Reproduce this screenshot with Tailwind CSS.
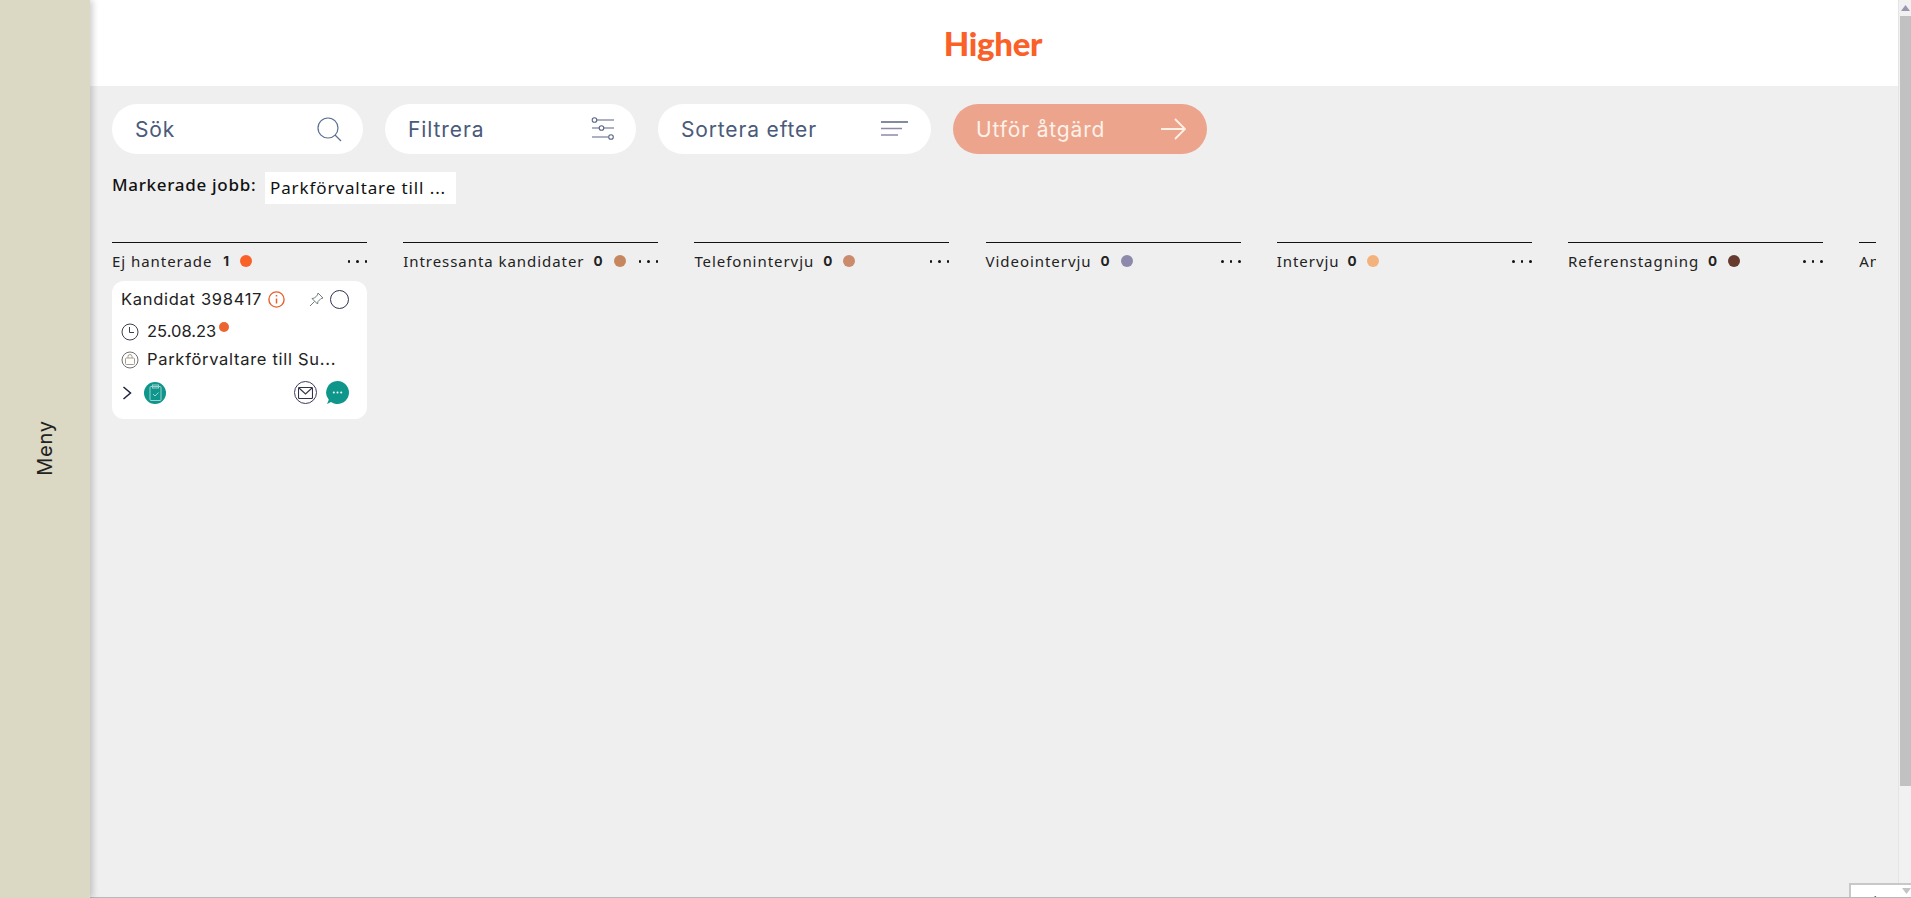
<!doctype html>
<html lang="sv">
<head>
<meta charset="utf-8">
<title>Higher</title>
<script src="https://cdn.jsdelivr.net/npm/@tailwindcss/browser@4"></script>
</head>
<body class="m-0 h-[898px] w-[1911px] overflow-hidden bg-[#efefef] font-['Inter',sans-serif]">
<div class="relative flex h-[898px] w-[1911px]">
  <aside class="z-10 flex h-full w-[90px] shrink-0 items-center justify-center bg-[#dbd8c4] shadow-[3px_0_6px_rgba(0,0,0,0.18)]">
    <span class="-mt-[2px] -rotate-90 text-[20px] tracking-[0.8px] text-[#222222]">Meny</span>
  </aside>
  <main class="flex h-full w-[1808px] shrink-0 flex-col">
    <header class="flex h-[86px] shrink-0 items-center justify-center bg-white">
      <span class="-ml-[2px] font-['Lato',sans-serif] text-[33px] leading-none font-black tracking-[-0.3px] text-[#fa6128]">Higher</span>
    </header>
    <div class="flex flex-col pl-[22px]">
      <div class="mt-[18px] flex gap-[22px]">
        <div class="flex h-[50px] w-[251px] items-center justify-between rounded-[25px] bg-white pr-[21px] pl-[23px] text-[21px] tracking-[0.9px] text-[#4a5a7a]">
          <span class="pt-[1px]">Sök</span>
          <svg class="h-[26px] w-[26px]" viewBox="0 0 26 26" fill="none" stroke="#5a7090" stroke-width="1.2"><circle cx="12" cy="12" r="10"/><path d="M19 19l6 6"/></svg>
        </div>
        <div class="flex h-[50px] w-[251px] items-center justify-between rounded-[25px] bg-white pr-[21px] pl-[23px] text-[21px] tracking-[0.9px] text-[#4a5a7a]">
          <span class="pt-[1px]">Filtrera</span>
          <svg class="h-[24px] w-[24px]" viewBox="0 0 24 24" fill="none" stroke="#5a6484" stroke-width="1.1"><path d="M6 3h17M1 11h7M13 11h10M1 20h16"/><circle cx="3.500" cy="3" r="2.300"/><circle cx="10.500" cy="11" r="2.300"/><circle cx="20" cy="20" r="2.300"/></svg>
        </div>
        <div class="flex h-[50px] w-[273px] items-center justify-between rounded-[25px] bg-white pr-[22px] pl-[23px] text-[21px] tracking-[0.85px] text-[#4a5a7a]">
          <span class="pt-[1px]">Sortera efter</span>
          <svg class="h-[16px] w-[28px]" viewBox="0 0 28 16" fill="none" stroke-width="1.500"><path d="M0 1h27" stroke="#5a6484"/><path d="M0 7.500h21" stroke="#8d89ab"/><path d="M0 14h17" stroke="#8d89ab"/></svg>
        </div>
        <div class="flex h-[50px] w-[254px] items-center justify-between rounded-[25px] bg-[#eca48c] pr-[21px] pl-[23px] text-[21px] tracking-[0.85px] text-[#fdf1e8]">
          <span class="pt-[1px]">Utför åtgärd</span>
          <svg class="h-[24px] w-[26px]" viewBox="0 0 26 24" fill="none" stroke="#fdf1e8" stroke-width="1.800"><path d="M1 12h24M15 2l10 10-10 10"/></svg>
        </div>
      </div>
      <div class="mt-[18px] flex h-[32px] items-center font-['Noto_Sans',sans-serif]">
        <span class="-mt-[6px] w-[153px] text-[17px] font-medium tracking-[0.7px] whitespace-nowrap text-[#111111]">Markerade jobb:</span>
        <span class="flex h-[32px] w-[191px] items-center bg-white pl-[5px] text-[17px] tracking-[0.9px] whitespace-nowrap text-[#111111]">Parkförvaltare till ...</span>
      </div>
      <div class="mt-[38px] flex w-[1764px] gap-[36.2px] overflow-hidden font-['Noto_Sans',sans-serif]">
        <section class="w-[255px] shrink-0">
          <div class="h-px bg-[#111111]"></div>
          <div class="mt-[7.5px] flex h-[22px] items-center text-[15px] tracking-[0.95px] text-[#222222]">
            <span class="whitespace-nowrap">Ej hanterade</span><b class="ml-[11px] font-['Inter',sans-serif] text-[13.500px] font-bold">1</b><i class="mb-[2px] ml-[10px] h-[12px] w-[12px] rounded-full bg-[#fa6128]"></i>
            <span class="ml-auto flex gap-[6px]"><i class="h-[2.500px] w-[2.500px] rounded-full bg-[#111111]"></i><i class="h-[2.500px] w-[2.500px] rounded-full bg-[#111111]"></i><i class="h-[2.500px] w-[2.500px] rounded-full bg-[#111111]"></i></span>
          </div>
          <article class="mt-[8px] h-[138px] rounded-[12px] bg-white pt-[7px] pr-[10px] pl-[9px] font-['Inter',sans-serif] text-[16.500px] tracking-[0.7px] text-[#222222]">
            <div class="flex h-[24px] items-center">
              <span class="whitespace-nowrap">Kandidat 398417</span>
              <svg class="ml-[6px] h-[17px] w-[17px]" viewBox="0 0 17 17" fill="none" stroke="#e8602c" stroke-width="1.400"><circle cx="8.500" cy="8.500" r="7.600"/><path d="M8.500 7.500v5M8.500 4v1.500" stroke-width="1.500"/></svg>
              <svg class="ml-auto h-[15px] w-[15px]" viewBox="0 0 15 15" fill="none" stroke="#6d7f7c" stroke-width="1"><path d="M9 1l5 5-2 .5-3 3-.5 2.500L3 6.500 5.500 6l3-3zM5.500 9.500L1 14"/></svg>
              <span class="mr-[8px] ml-[6px] h-[19px] w-[19px] rounded-full border-[1.300px] border-[#2d3352]"></span>
            </div>
            <div class="mt-[9px] flex h-[22px] items-center tracking-normal">
              <svg class="mr-[8px] h-[18px] w-[18px]" viewBox="0 0 18 18" fill="none" stroke="#3b4050" stroke-width="1"><circle cx="9" cy="9" r="8"/><path d="M8.500 4v5.500H13"/></svg>
              <span>25.08.23</span><i class="mb-[10px] ml-[3px] h-[10px] w-[10px] rounded-full bg-[#ec652f]"></i>
            </div>
            <div class="mt-[6px] flex h-[22px] items-center">
              <svg class="mr-[8px] h-[18px] w-[18px]" viewBox="0 0 18 18" fill="none" stroke="#6c6f75" stroke-width="1"><circle cx="9" cy="9" r="8"/><rect x="4.500" y="7" width="9" height="6.500" rx="1" stroke="#a89c86"/><path d="M7 7V5.500a2 2 0 0 1 4 0V7" stroke="#a89c86"/></svg>
              <span class="whitespace-nowrap">Parkförvaltare till Su...</span>
            </div>
            <div class="mt-[10px] flex h-[24px] items-center">
              <svg class="ml-[1px] h-[14px] w-[10px]" viewBox="0 0 10 14" fill="none" stroke="#1b2040" stroke-width="1.500"><path d="M1.500 1l7 6-7 6"/></svg>
              <span class="ml-[12px] flex h-[22px] w-[22px] items-center justify-center rounded-full bg-[#0e968a]">
                <svg class="h-[17px] w-[13px]" viewBox="0 0 13 17" fill="none" stroke="#9fd2d0" stroke-width="1"><rect x="1" y="2.500" width="11" height="14" rx="1"/><rect x="3.500" y="1" width="6" height="3"/><path d="M4 10l2 2 3.500-3.500"/></svg>
              </span>
              <span class="ml-auto flex h-[23px] w-[23px] items-center justify-center rounded-full border-[1.300px] border-[#3d3a5c]">
                <svg class="h-[12px] w-[15px]" viewBox="0 0 15 12" fill="none" stroke="#333347" stroke-width="1.100"><rect x=".5" y=".5" width="14" height="11" rx="1"/><path d="M1 1l6.500 6L14 1"/></svg>
              </span>
              <svg class="mr-[7px] ml-[8px] h-[25px] w-[25px]" viewBox="0 0 25 25"><path d="M12.500 1a11.500 11.500 0 1 1-6.500 21L2 24l1.800-4.200A11.500 11.500 0 0 1 12.500 1z" fill="#0e968a"/><circle cx="8.800" cy="12.500" r="1" fill="#fff"/><circle cx="12.500" cy="12.500" r="1" fill="#fff"/><circle cx="16.200" cy="12.500" r="1" fill="#fff"/></svg>
            </div>
          </article>
        </section>
        <section class="w-[255px] shrink-0">
          <div class="h-px bg-[#111111]"></div>
          <div class="mt-[7.5px] flex h-[22px] items-center text-[15px] tracking-[0.95px] text-[#222222]">
            <span class="whitespace-nowrap">Intressanta kandidater</span><b class="ml-[9px] font-['Inter',sans-serif] text-[13.500px] font-bold">0</b><i class="mb-[2px] ml-[10px] h-[12px] w-[12px] rounded-full bg-[#c6865f]"></i>
            <span class="ml-auto flex gap-[6px]"><i class="h-[2.500px] w-[2.500px] rounded-full bg-[#111111]"></i><i class="h-[2.500px] w-[2.500px] rounded-full bg-[#111111]"></i><i class="h-[2.500px] w-[2.500px] rounded-full bg-[#111111]"></i></span>
          </div>
        </section>
        <section class="w-[255px] shrink-0">
          <div class="h-px bg-[#111111]"></div>
          <div class="mt-[7.5px] flex h-[22px] items-center text-[15px] tracking-[0.95px] text-[#222222]">
            <span>Telefonintervju</span><b class="ml-[9px] font-['Inter',sans-serif] text-[13.500px] font-bold">0</b><i class="mb-[2px] ml-[10px] h-[12px] w-[12px] rounded-full bg-[#cc8a6c]"></i>
            <span class="ml-auto flex gap-[6px]"><i class="h-[2.500px] w-[2.500px] rounded-full bg-[#111111]"></i><i class="h-[2.500px] w-[2.500px] rounded-full bg-[#111111]"></i><i class="h-[2.500px] w-[2.500px] rounded-full bg-[#111111]"></i></span>
          </div>
        </section>
        <section class="w-[255px] shrink-0">
          <div class="h-px bg-[#111111]"></div>
          <div class="mt-[7.5px] flex h-[22px] items-center text-[15px] tracking-[0.95px] text-[#222222]">
            <span>Videointervju</span><b class="ml-[9px] font-['Inter',sans-serif] text-[13.500px] font-bold">0</b><i class="mb-[2px] ml-[10px] h-[12px] w-[12px] rounded-full bg-[#8d89ab]"></i>
            <span class="ml-auto flex gap-[6px]"><i class="h-[2.500px] w-[2.500px] rounded-full bg-[#111111]"></i><i class="h-[2.500px] w-[2.500px] rounded-full bg-[#111111]"></i><i class="h-[2.500px] w-[2.500px] rounded-full bg-[#111111]"></i></span>
          </div>
        </section>
        <section class="w-[255px] shrink-0">
          <div class="h-px bg-[#111111]"></div>
          <div class="mt-[7.5px] flex h-[22px] items-center text-[15px] tracking-[0.95px] text-[#222222]">
            <span>Intervju</span><b class="ml-[8px] font-['Inter',sans-serif] text-[13.500px] font-bold">0</b><i class="mb-[2px] ml-[9px] h-[12px] w-[12px] rounded-full bg-[#f3b27c]"></i>
            <span class="ml-auto flex gap-[6px]"><i class="h-[2.500px] w-[2.500px] rounded-full bg-[#111111]"></i><i class="h-[2.500px] w-[2.500px] rounded-full bg-[#111111]"></i><i class="h-[2.500px] w-[2.500px] rounded-full bg-[#111111]"></i></span>
          </div>
        </section>
        <section class="w-[255px] shrink-0">
          <div class="h-px bg-[#111111]"></div>
          <div class="mt-[7.5px] flex h-[22px] items-center text-[15px] tracking-[0.95px] text-[#222222]">
            <span>Referenstagning</span><b class="ml-[9px] font-['Inter',sans-serif] text-[13.500px] font-bold">0</b><i class="mb-[2px] ml-[10px] h-[12px] w-[12px] rounded-full bg-[#673a2e]"></i>
            <span class="ml-auto flex gap-[6px]"><i class="h-[2.500px] w-[2.500px] rounded-full bg-[#111111]"></i><i class="h-[2.500px] w-[2.500px] rounded-full bg-[#111111]"></i><i class="h-[2.500px] w-[2.500px] rounded-full bg-[#111111]"></i></span>
          </div>
        </section>
        <section class="w-[255px] shrink-0">
          <div class="h-px bg-[#111111]"></div>
          <div class="mt-[7.5px] flex h-[22px] items-center text-[15px] tracking-[0.95px] text-[#222222]">
            <span>Anställd</span>
          </div>
        </section>
      </div>
    </div>
  </main>
  <div class="flex h-full w-[13px] shrink-0 flex-col items-end border-l border-[#e4e4e4] bg-[#f1f1f1]">
    <div class="flex h-[16px] w-[11px] items-center justify-center">
      <svg class="h-[6px] w-[9px]" viewBox="0 0 9 6"><path d="M4.500 0L9 6H0z" fill="#9b96b0"/></svg>
    </div>
    <div class="h-[770px] w-[11px] bg-[#c1c1c1]"></div>
  </div>
  <div class="absolute right-0 bottom-0 h-[15px] w-[62px] overflow-hidden border-t-2 border-l-2 border-[#c8c8c8] bg-white pt-[8px] pl-[6px] font-['Noto_Sans',sans-serif] text-[13px] leading-[16px] tracking-[1px] text-[#444444]">Select
    <svg class="absolute top-[3px] right-0 h-[6px] w-[9px]" viewBox="0 0 9 6"><path d="M0 0h9L4.500 6z" fill="#c4c4c4"/></svg>
  </div>
  <div class="absolute right-0 bottom-0 left-0 h-px bg-[#b8b8b8]"></div>
</div>
</body>
</html>
